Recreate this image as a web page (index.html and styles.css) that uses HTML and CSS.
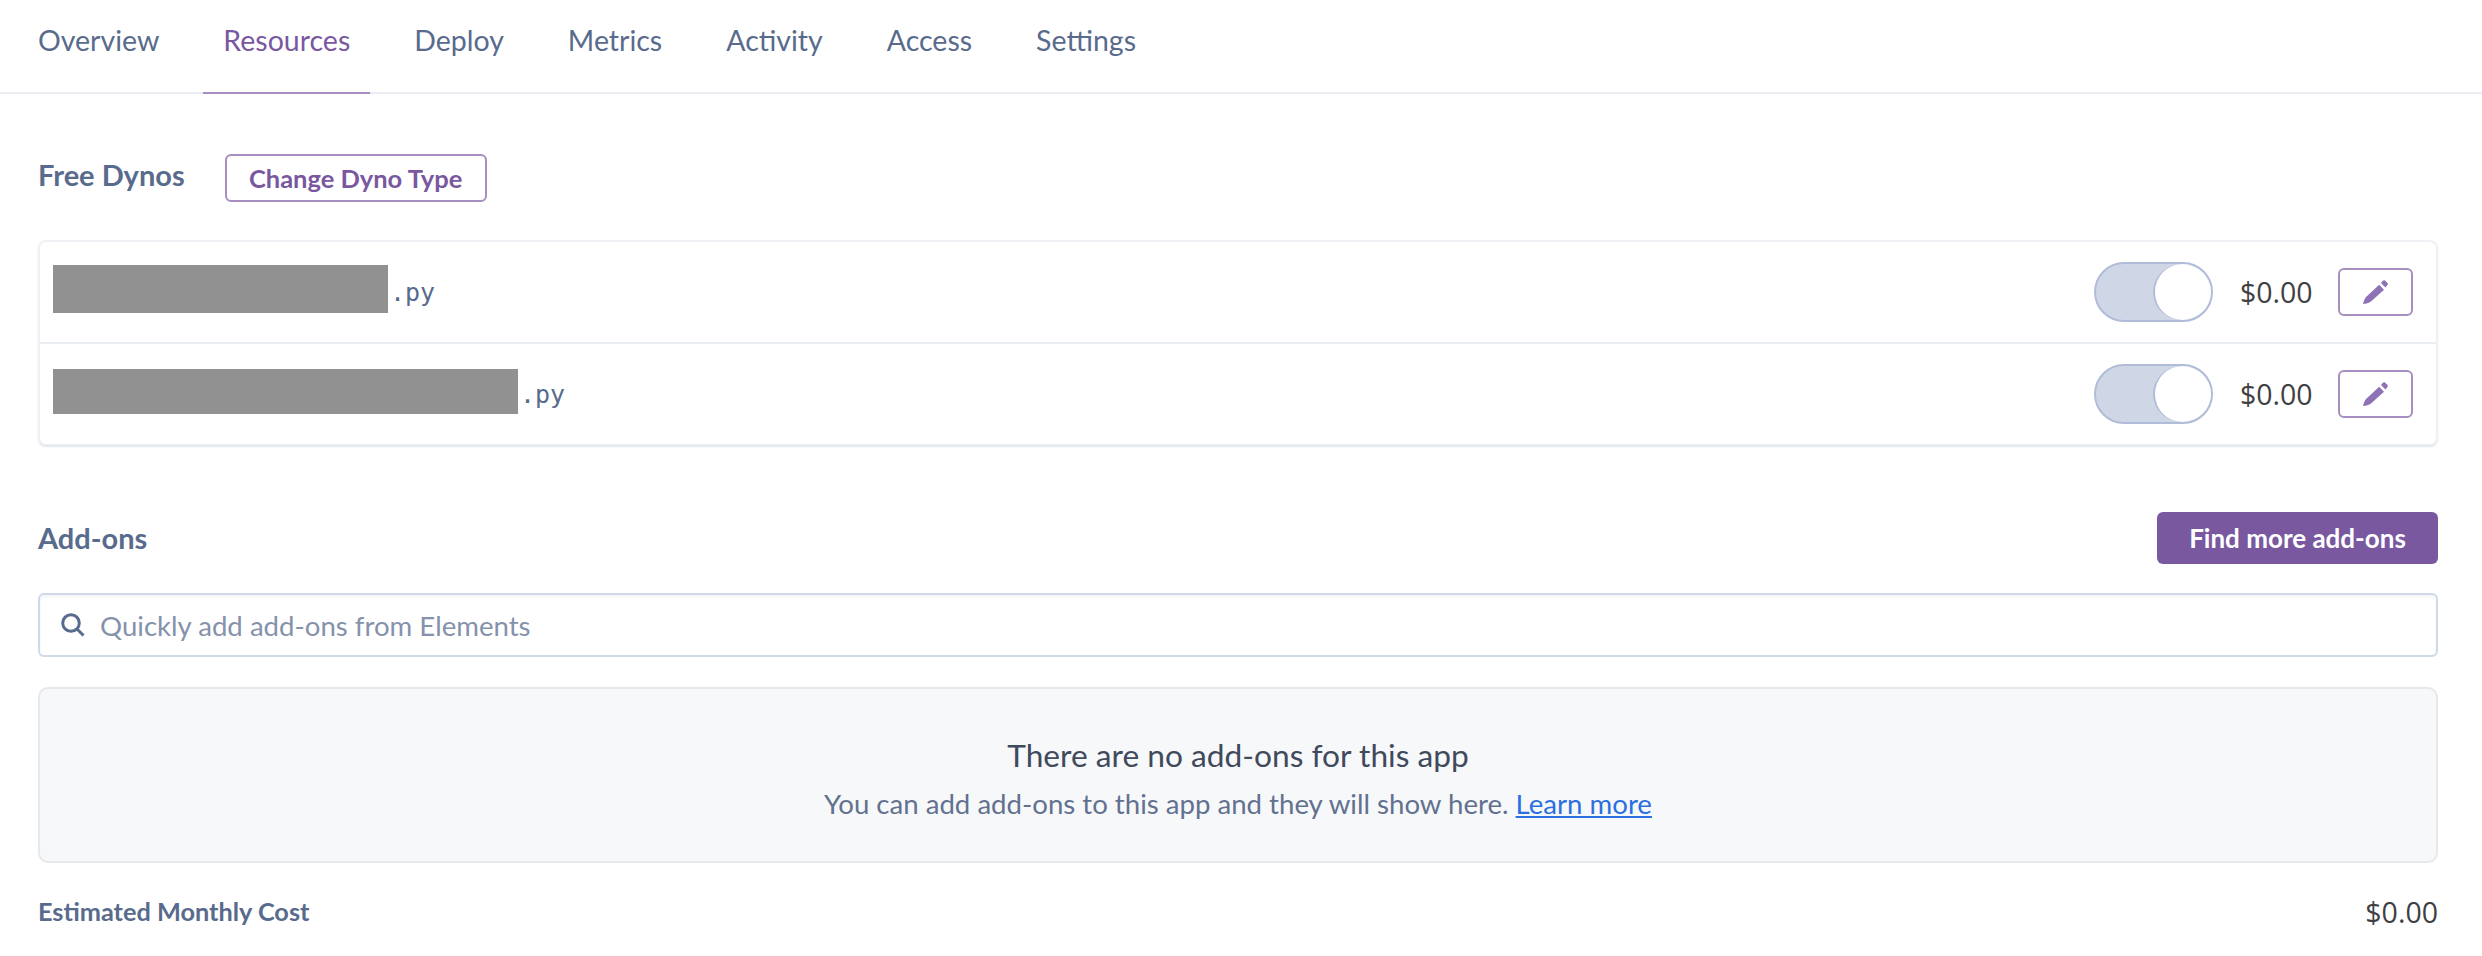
FILE: index.html
```html
<!DOCTYPE html>
<html lang="en">
<head>
  <meta charset="UTF-8" />
  <title>Resources</title>
  <link rel="stylesheet" href="styles.css">
</head>
<body>
  <nav class="tabs">
    <a class="tab">Overview</a>
    <a class="tab active">Resources</a>
    <a class="tab">Deploy</a>
    <a class="tab">Metrics</a>
    <a class="tab">Activity</a>
    <a class="tab">Access</a>
    <a class="tab">Settings</a>
  </nav>

  <main class="content">
    <div class="dyno-head">
      <h2 class="section-title">Free Dynos</h2>
      <button class="btn-outline">Change Dyno Type</button>
    </div>

    <div class="dyno-card">
      <div class="dyno-row">
        <div class="dyno-name"><span class="mask mask-short"></span><span class="ext">.py</span></div>
        <div class="toggle"><span class="knob"></span></div>
        <span class="price">$0.00</span>
        <button class="btn-edit">
          <svg class="pencil" viewBox="0 0 25 24"><path d="M0 24C.6 21.500 1.600 18.800 3.300 16.800L16.200 4.700 21 9.700 8 21.400C6 23 3 23.800 0 24Z"/><path d="M18 2.900 19.800.7C20.500 0 21.300 0 22 .5L24.300 2.800C25 3.500 25 4.300 24.400 5L22.500 7.400Z"/></svg>
        </button>
      </div>
      <div class="dyno-row">
        <div class="dyno-name"><span class="mask mask-long"></span><span class="ext">.py</span></div>
        <div class="toggle"><span class="knob"></span></div>
        <span class="price">$0.00</span>
        <button class="btn-edit">
          <svg class="pencil" viewBox="0 0 25 24"><path d="M0 24C.6 21.500 1.600 18.800 3.300 16.800L16.200 4.700 21 9.700 8 21.400C6 23 3 23.800 0 24Z"/><path d="M18 2.900 19.800.7C20.500 0 21.300 0 22 .5L24.300 2.800C25 3.500 25 4.300 24.400 5L22.500 7.400Z"/></svg>
        </button>
      </div>
    </div>

    <div class="addons-head">
      <h2 class="section-title">Add-ons</h2>
      <button class="btn-solid">Find more add-ons</button>
    </div>

    <div class="search">
      <svg class="search-icon" viewBox="0 0 24 24"><circle cx="10" cy="10" r="8.300"/><path d="M16 16 22.500 22.500"/></svg>
      <input type="text" placeholder="Quickly add add-ons from Elements" />
    </div>

    <div class="empty-box">
      <p class="empty-title">There are no add-ons for this app</p>
      <p class="empty-text">You can add add-ons to this app and they will show here. <a class="link">Learn more</a></p>
    </div>

    <div class="cost-row">
      <span class="cost-label">Estimated Monthly Cost</span>
      <span class="cost-value">$0.00</span>
    </div>
  </main>
</body>
</html>
```

FILE: styles.css
```css
html, body {
  margin: 0;
  padding: 0;
  height: 100%;
  overflow: hidden;
  background: #fff;
}

body {
  font-family: 'Lato', sans-serif;
  color: #596b8c;
}

.tabs {
  display: flex;
  gap: 24px;
  height: 92px;
  padding-left: 18px;
  border-bottom: 2px solid #e9edf2;
}

.tab {
  padding: 20px 20px 0;
  margin-bottom: -2px;
  font-size: 28.500px;
  line-height: 41px;
  border-bottom: 2px solid transparent;
}

.tab.active {
  color: #79589f;
  border-bottom-color: #a68fc0;
}

.content {
  padding: 60px 44px 0 38px;
}

.section-title {
  margin: 0;
  font-size: 29px;
  font-weight: 700;
  line-height: 36px;
  color: #596b8c;
}

button {
  font-family: inherit;
  cursor: pointer;
}

.dyno-head {
  display: flex;
  align-items: center;
  gap: 40px;
  height: 48px;
  margin-bottom: 38px;
}

.dyno-head .section-title {
  margin-top: -6px;
}

.btn-outline {
  width: 262px;
  height: 48px;
  padding: 0;
  background: #fff;
  border: 2px solid #a68fc0;
  border-radius: 6px;
  color: #79589f;
  font-size: 25.500px;
  font-weight: 700;
}

.dyno-card {
  border: 2px solid #eef0f3;
  border-bottom-width: 1px;
  border-radius: 8px;
  box-shadow: 0 2px 2px rgba(89, 107, 140, 0.18);
}

.dyno-row {
  display: flex;
  align-items: center;
  height: 100px;
  padding: 0 23px 0 13px;
}

.dyno-row + .dyno-row {
  border-top: 2px solid #e9edf2;
}

.dyno-name {
  flex: 1;
  display: flex;
  align-items: center;
}

.mask {
  display: block;
  margin-bottom: 6px;
  background: #919191;
}

.mask-short {
  width: 335px;
  height: 48px;
}

.mask-long {
  width: 465px;
  height: 45px;
}

.ext {
  margin-left: 2px;
  font-family: 'DejaVu Sans Mono', monospace;
  font-size: 25px;
  color: #596b8c;
}

.toggle {
  display: flex;
  justify-content: flex-end;
  box-sizing: border-box;
  width: 119px;
  height: 60px;
  background: #cfd7e6;
  border: 2px solid #b0bcd8;
  border-radius: 30px;
}

.knob {
  box-sizing: border-box;
  width: 58px;
  height: 56px;
  background: #fff;
  border-left: 2px solid #b0bcd8;
  border-radius: 50%;
}

.price {
  margin-left: 27px;
  width: 73px;
  font-family: 'Open Sans', sans-serif;
  font-size: 28.500px;
  color: #3f3f44;
}

.btn-edit {
  display: flex;
  align-items: center;
  justify-content: center;
  box-sizing: border-box;
  width: 75px;
  height: 48px;
  margin-left: 25px;
  padding: 0;
  background: #fff;
  border: 2px solid #a68fc0;
  border-radius: 6px;
}

.pencil {
  width: 25px;
  height: 24px;
  fill: #8f71b6;
}

.addons-head {
  display: flex;
  align-items: center;
  justify-content: space-between;
  height: 52px;
  margin-top: 67px;
  margin-bottom: 29px;
}

.btn-solid {
  width: 281px;
  height: 52px;
  padding: 0;
  background: #79589f;
  border: none;
  border-radius: 6px;
  color: #fff;
  font-size: 26px;
  font-weight: 700;
}

.search {
  display: flex;
  align-items: center;
  gap: 15px;
  box-sizing: border-box;
  height: 64px;
  padding-left: 21px;
  border: 2px solid #cfd9e8;
  border-radius: 6px;
  box-shadow: inset 0 2px 3px rgba(89, 107, 140, 0.08);
}

.search-icon {
  flex: none;
  width: 24px;
  height: 24px;
  fill: none;
  stroke: #596b8c;
  stroke-width: 3;
}

.search input {
  flex: 1;
  border: none;
  outline: none;
  padding: 0;
  background: transparent;
  font-family: inherit;
  font-size: 27.600px;
}

.search input::placeholder {
  color: #8592ab;
  opacity: 1;
}

.empty-box {
  box-sizing: border-box;
  height: 176px;
  margin-top: 30px;
  padding-top: 46px;
  background: #f7f8fa;
  border: 2px solid #e6e8eb;
  border-radius: 10px;
  text-align: center;
}

.empty-title {
  margin: 0;
  font-size: 31.700px;
  line-height: 40px;
  color: #3f4a5c;
}

.empty-text {
  margin: 10px 0 0;
  font-size: 27.600px;
  line-height: 38px;
  color: #62718f;
}

.link {
  color: #2b6fe0;
  text-decoration: underline;
}

.cost-row {
  display: flex;
  justify-content: space-between;
  align-items: center;
  margin-top: 30px;
  height: 38px;
}

.cost-label {
  margin-bottom: 2px;
  font-size: 25.300px;
  font-weight: 700;
  color: #596b8c;
}

.cost-value {
  font-family: 'Open Sans', sans-serif;
  font-size: 28.500px;
  color: #3f3f44;
}
```
